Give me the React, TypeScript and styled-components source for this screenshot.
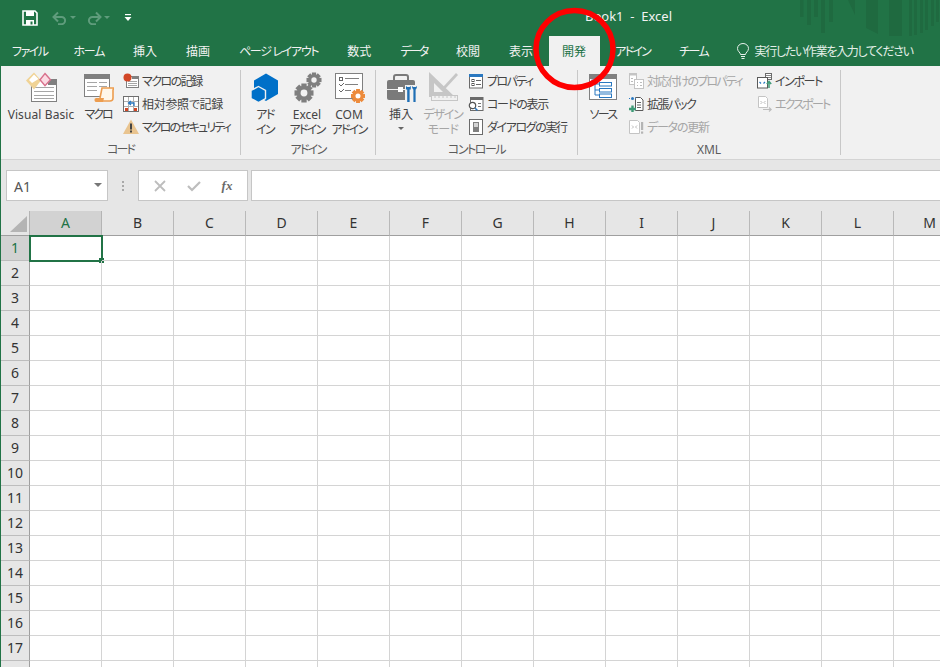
import { FC, ReactNode } from 'react'
import styled, { createGlobalStyle } from 'styled-components'

const GlobalStyle = createGlobalStyle`
html, body { margin: 0; padding: 0; background: #fff; }
body { width: 940px; height: 667px; overflow: hidden; }
`
const GREEN = '#217346'
const INK = '#444'
const DIM = '#a6a6a6'
const FONT = `"Noto Sans", "Noto Sans CJK JP", sans-serif`

const Page = styled.div`
position: relative;
width: 940px;
height: 667px;
overflow: hidden;
border-left: 1px solid ${GREEN};
box-sizing: border-box;
font-family: ${FONT};
font-feature-settings: "palt";
font-size: 12px;
color: ${INK};
background: #fff;
`
// kana in the reference font are narrower than Noto's, so each label carries its own tracking
const Txt = styled.span<{ $t?: number }>`
letter-spacing: ${p => p.$t ?? 0}px;
white-space: pre;
`
const TitleBar = styled.div`
position: relative;
height: 36px;
background: ${GREEN};
display: flex;
align-items: center;
padding-left: 21px;
box-sizing: border-box;
`
const Qat = styled.div`
display: flex;
align-items: center;
width: 563px;
`
const QatButton = styled.span<{ $w: number }>`
width: ${p => p.$w}px;
height: 16px;
display: flex;
align-items: center;
`
const WindowTitle = styled.div`
color: #f2f2f2;
font-size: 13px;
white-space: pre;
margin-top: -5px;
`
const Stripes = styled.svg`
position: absolute;
right: 0;
top: 0;
`
const TabStrip = styled.div`
height: 30px;
background: ${GREEN};
display: flex;
align-items: stretch;
gap: 2px;
`
const Tab = styled.div<{ $active?: boolean }>`
padding: 0 13.5px;
display: flex;
align-items: center;
white-space: pre;
color: ${p => (p.$active ? GREEN : '#f2f2f2')};
background: ${p => (p.$active ? '#f1f1f1' : 'transparent')};
&:first-child { padding: 0 10.5px 0 11px; }
`
const TellMe = styled.div`
margin-left: 12px;
display: flex;
align-items: center;
gap: 5px;
color: #e4efe8;
white-space: pre;
`
const Ribbon = styled.div`
height: 94px;
background: #f1f1f1;
border-bottom: 1px solid #d4d4d4;
box-sizing: border-box;
display: flex;
padding-top: 4px;
`
const Group = styled.div<{ $w: number }>`
width: ${p => p.$w}px;
height: 85px;
box-sizing: border-box;
border-right: 1px solid #c8c8c8;
display: flex;
flex-direction: column;
`
const GroupBody = styled.div<{ $pad: number }>`
height: 73px;
display: flex;
padding-left: ${p => p.$pad}px;
padding-top: 1px;
box-sizing: border-box;
`
const GroupLabel = styled.div`
height: 12px;
line-height: 14px;
text-align: center;
color: #5c5c5c;
`
const LargeButton = styled.div<{ $w: number; $off?: boolean }>`
width: ${p => p.$w}px;
display: flex;
flex-direction: column;
align-items: center;
flex-shrink: 0;
color: ${p => (p.$off ? DIM : INK)};
svg { display: block; flex-shrink: 0; }
`
const LargeLabel = styled.div`
margin-top: 4px;
text-align: center;
${Txt} {
  display: block;
  height: 15px;
  line-height: 15px;
}
`
const Caret = styled.div`
width: 0;
height: 0;
margin-top: 5px;
border-left: 3px solid transparent;
border-right: 3px solid transparent;
border-top: 3px solid #666;
`
const SmallColumn = styled.div<{ $w: number; $left: number }>`
width: ${p => p.$w}px;
margin-left: ${p => p.$left}px;
display: flex;
flex-direction: column;
gap: 5px;
padding-top: 1px;
flex-shrink: 0;
`
const SmallButton = styled.div<{ $off?: boolean }>`
height: 18px;
display: flex;
align-items: center;
gap: 3px;
white-space: pre;
color: ${p => (p.$off ? DIM : INK)};
svg { flex-shrink: 0; }
`
const FormulaArea = styled.div`
height: 51px;
background: #e6e6e6;
display: flex;
align-items: flex-start;
padding: 10px 0 0 5px;
box-sizing: border-box;
`
const NameBox = styled.div`
width: 102px;
height: 31px;
box-sizing: border-box;
background: #fff;
border: 1px solid #c6c6c6;
display: flex;
align-items: center;
justify-content: space-between;
padding: 2px 5px 0 7px;
font-size: 14px;
color: #555;
`
const NameCaret = styled.span`
width: 0;
height: 0;
border-left: 4px solid transparent;
border-right: 4px solid transparent;
border-top: 4px solid #777;
margin-top: -4px;
`
const Dots = styled.div`
width: 30px;
height: 31px;
display: flex;
flex-direction: column;
align-items: center;
justify-content: center;
gap: 2px;
span { width: 2px; height: 2px; background: #a8a8a8; }
`
const FormulaButtons = styled.div`
width: 110px;
height: 31px;
box-sizing: border-box;
background: #fff;
border: 1px solid #c6c6c6;
display: flex;
align-items: center;
justify-content: space-around;
padding: 0 4px;
`
const FxLabel = styled.span`
font-family: "Liberation Serif", serif;
font-style: italic;
font-weight: 700;
font-size: 13px;
color: #6a6a6a;
`
const FormulaInput = styled.div`
flex: 1;
height: 31px;
margin-left: 3px;
box-sizing: border-box;
background: #fff;
border: 1px solid #c6c6c6;
border-right: none;
`
const Sheet = styled.div`
display: grid;
grid-template-columns: 29px repeat(13, 72px);
grid-auto-rows: 25px;
`
const Corner = styled.div`
height: 25px;
background: #e6e6e6;
box-sizing: border-box;
border-right: 1px solid #b4b4b4;
border-bottom: 1px solid #9f9f9f;
svg { display: block; }
`
const ColHead = styled.div<{ $on?: boolean }>`
box-sizing: border-box;
background: ${p => (p.$on ? '#d2d2d2' : '#e6e6e6')};
border-right: 1px solid ${p => (p.$on ? '#b4b4b4' : '#b9b9b9')};
border-bottom: 1px solid #9f9f9f;
display: flex;
align-items: center;
justify-content: center;
padding-bottom: 1px;
font-family: "Noto Sans", sans-serif;
font-size: 14px;
color: ${p => (p.$on ? GREEN : '#333')};
`
const RowHead = styled.div<{ $on?: boolean }>`
box-sizing: border-box;
background: ${p => (p.$on ? '#d2d2d2' : '#e6e6e6')};
border-right: 1px solid #9f9f9f;
border-bottom: 1px solid #bdbdbd;
display: flex;
align-items: center;
justify-content: center;
padding-bottom: 2px;
font-family: "Noto Sans", sans-serif;
font-size: 14px;
color: ${p => (p.$on ? GREEN : '#333')};
`
const Cell = styled.div`
position: relative;
box-sizing: border-box;
border-right: 1px solid #d4d4d4;
border-bottom: 1px solid #d4d4d4;
`
const Selection = styled.div`
position: absolute;
left: -1px;
top: -1px;
width: 74px;
height: 27px;
box-sizing: border-box;
border: 2px solid ${GREEN};
`
const Handle = styled.div`
position: absolute;
right: -3px;
bottom: -3px;
width: 5px;
height: 5px;
background: ${GREEN};
`
const Highlight = styled.svg`
position: absolute;
left: 530px;
top: 5px;
pointer-events: none;
`

const Icon: FC<{ s?: number; children: ReactNode }> = ({ s = 16, children }) => (
  <svg width={s} height={s} viewBox={`0 0 ${s} ${s}`}>{children}</svg>
)

const Gear: FC<{ cx: number; cy: number; r: number; color: string; hole?: string }> = ({ cx, cy, r, color, hole = '#f1f1f1' }) => (
  <g>
    {[0, 45, 90, 135].map(a => (
      <rect key={a} x={cx - r * 0.28} y={cy - r} width={r * 0.56} height={r * 2} fill={color} transform={`rotate(${a} ${cx} ${cy})`} />
    ))}
    <circle cx={cx} cy={cy} r={r * 0.76} fill={color} />
    <circle cx={cx} cy={cy} r={r * 0.36} fill={hole} />
  </g>
)

const SaveIcon = () => (
  <svg width="16" height="16" viewBox="0 0 16 16">
    <path d="M1 1h12l2 2v12H1z" fill="none" stroke="#fff" strokeWidth="1.6" />
    <rect x="4" y="1" width="8" height="5" fill="#fff" />
    <rect x="4" y="10" width="8" height="5" fill="#fff" />
    <rect x="8.5" y="11.5" width="2" height="3" fill={GREEN} />
  </svg>
)
const UndoIcon: FC<{ flip?: boolean }> = ({ flip }) => (
  <svg width="15" height="14" viewBox="0 0 15 14" style={flip ? { transform: 'scaleX(-1)' } : undefined}>
    <path d="M2 6h7.5a3.6 3.6 0 0 1 0 7.2H6" fill="none" stroke="#5f9c7c" strokeWidth="2" />
    <path d="M6 1.5L1.5 6 6 10.5" fill="none" stroke="#5f9c7c" strokeWidth="2" />
  </svg>
)
const TinyCaret = () => (
  <svg width="6" height="4" viewBox="0 0 6 4"><path d="M0 0h6L3 3z" fill="#5f9c7c" /></svg>
)
const CustomizeIcon = () => (
  <svg width="8" height="8" viewBox="0 0 8 8">
    <rect x="1" y="0" width="6" height="1.2" fill="#fff" />
    <path d="M0.5 3h7L4 7z" fill="#fff" />
  </svg>
)
const BulbIcon = () => (
  <svg width="14" height="17" viewBox="0 0 14 17" fill="none" stroke="#e8f1ec" strokeWidth="1">
    <path d="M4.5 11.5C4.5 9.5 1.5 8.5 1.5 5.5a5.5 5 0 0 1 11 0c0 3-3 4-3 6z" />
    <path d="M5 13.5h4M5.5 15.5h3" />
  </svg>
)

const SheetLines: FC<{ x1: number; x2: number; ys: number[]; color?: string }> = ({ x1, x2, ys, color = '#a6a6a6' }) => (
  <>{ys.map(y => <path key={y} d={`M${x1} ${y + 0.5}H${x2}`} stroke={color} />)}</>
)

const VbIcon = () => (
  <Icon s={32}>
    <rect x="6.5" y="8.5" width="25" height="22" fill="#fff" stroke="#808080" />
    <rect x="23" y="8" width="9" height="6" fill="#808080" />
    <SheetLines x1={9} x2={29} ys={[16, 20, 24, 27]} />
    <path d="M9 1.5l7 8-7 9-8-9z" fill="#f0d395" />
    <path d="M9 3.5l4.5 4.500-6.500 4-3-3z" fill="#fff" />
    <path d="M20 2.5l5.5 6.2-5.5 6-5-6z" fill="#fbdbe3" stroke="#d8708c" strokeWidth="1.4" />
  </Icon>
)
const MacroIcon = () => (
  <Icon s={32}>
    <rect x="2.5" y="3.5" width="25" height="22" fill="#fff" stroke="#808080" />
    <rect x="2" y="3" width="26" height="5" fill="#808080" />
    <SheetLines x1={5} x2={15} ys={[11, 15, 19]} />
    <SheetLines x1={17} x2={25} ys={[11, 15]} />
    <path d="M20 17h12l-1 2v8c0 2-1 3-3 3H17l1-3z" fill="#fff7ea" stroke="#ed9d4f" strokeWidth="1.6" />
    <path d="M14 27h8l-1 4h-6a2 2 0 0 1-1-4z" fill="#ed9d4f" />
  </Icon>
)
const RecordIcon = () => (
  <Icon>
    <rect x="3.5" y="3.5" width="12" height="11" fill="#fff" stroke="#808080" />
    <rect x="9" y="3" width="7" height="3" fill="#808080" />
    <SheetLines x1={5} x2={14} ys={[8, 10, 12]} />
    <circle cx="4.5" cy="4.5" r="4" fill="#d24726" />
  </Icon>
)
const RelativeIcon = () => (
  <Icon>
    <rect x="0.5" y="0.5" width="15" height="15" fill="#fff" stroke="#6f6f6f" />
    <path d="M5.5 1v14M10.5 1v14M1 5.5h14M1 10.5h14" stroke="#b0b0b0" />
    <rect x="2" y="12" width="3" height="3" fill="#d24726" />
    <rect x="11" y="12" width="3" height="3" fill="#d24726" />
    <path d="M11 10V7H6M8 5L5.5 7 8 9" fill="none" stroke="#2a78c0" strokeWidth="1.3" />
  </Icon>
)
const SecurityIcon = () => (
  <Icon>
    <path d="M8 0.5L16 15H0z" fill="#e9c48f" />
    <rect x="7" y="4.5" width="2" height="6" fill="#444" />
    <rect x="7" y="11.5" width="2" height="2" fill="#444" />
  </Icon>
)
const AddinIcon = () => (
  <Icon s={32}>
    <path d="M17 2.5l12 7v13.5l-12 7-12-7V9.500z" fill="#0070c8" />
    <path d="M9.500 15.500l7 4v8l-7 4-7.500-4v-8z" fill="#0070c8" stroke="#f1f1f1" strokeWidth="1.4" />
  </Icon>
)
const ExcelAddinIcon = () => (
  <Icon s={32}>
    <Gear cx={13} cy={22} r={9.500} color="#7f7f7f" />
    <Gear cx={23} cy={9} r={7.500} color="#7f7f7f" />
  </Icon>
)
const ComAddinIcon = () => (
  <Icon s={32}>
    <rect x="2.500" y="2.500" width="27" height="25" fill="#fff" stroke="#808080" />
    <rect x="6.500" y="6.500" width="3" height="3" fill="none" stroke="#666" />
    <path d="M12 7.500h14M12 13.500h13M12 19.500h6" stroke="#808080" />
    <path d="M6 13l2 2 3-3M6 19l2 2 3-3" fill="none" stroke="#666" />
    <Gear cx={25} cy={25} r={7} color="#ed8b3c" hole="#fff" />
  </Icon>
)
const InsertIcon = () => (
  <Icon s={32}>
    <path d="M9 9V6a2 2 0 0 1 2-2h10a2 2 0 0 1 2 2v3" fill="none" stroke="#7a7a7a" strokeWidth="2" />
    <rect x="2" y="9" width="28" height="20" rx="2" fill="#7a7a7a" />
    <path d="M2 18.500h28" stroke="#f1f1f1" />
    <rect x="13" y="16" width="5" height="5" fill="#fff" />
    <path d="M20 14h12v18H20z" fill="#f1f1f1" />
    <path d="M21 15v3.500h1.200V31h2.400V18.500h1.200V15l-1.200 1h-2.400z" fill="#1f6fb5" />
    <path d="M27 15c0 2 1 3.500 1.400 3.500V31h2.200V18.500c.5 0 1.400-1.500 1.400-3.500l-1.200 1h-2.600z" fill="#1f6fb5" />
  </Icon>
)
const DesignIcon = () => (
  <Icon s={32}>
    <path d="M2 1v25h26zM7 12v9h9z" fill="#c6c6c6" fillRule="evenodd" />
    <path d="M31 4l-12 13-3 1 1-3L29 2z" fill="#c6c6c6" />
    <rect x="4.500" y="24.500" width="26" height="5" fill="#f1f1f1" stroke="#c6c6c6" />
    <path d="M8 25v2M12 25v2M16 25v2M20 25v2M24 25v2M28 25v2" stroke="#c6c6c6" />
  </Icon>
)
const PropIcon = () => (
  <Icon>
    <rect x="1.500" y="1.500" width="13" height="13.500" fill="#fff" stroke="#6b6b6b" />
    <rect x="1" y="1" width="14" height="3" fill="#2a78c0" />
    <rect x="4" y="6.500" width="2" height="2" fill="none" stroke="#555" />
    <rect x="4" y="10.500" width="2" height="2" fill="none" stroke="#555" />
    <path d="M8 7.500h5M8 11.500h5" stroke="#666" />
  </Icon>
)
const CodeIcon = () => (
  <Icon>
    <rect x="2.500" y="1.500" width="12.500" height="13" fill="#fff" stroke="#6b6b6b" />
    <rect x="2" y="1" width="13" height="3" fill="#6b6b6b" />
    <path d="M10 7.500h3M10 10.500h3" stroke="#777" />
    <circle cx="4.500" cy="9.500" r="3.200" fill="#fff" stroke="#555" strokeWidth="1.200" />
    <path d="M7 12l2.500 2.500" stroke="#2a78c0" strokeWidth="1.500" />
  </Icon>
)
const DialogIcon = () => (
  <Icon>
    <rect x="1.500" y="0.500" width="13" height="15" fill="#fff" stroke="#6b6b6b" />
    <rect x="5.500" y="3.500" width="5" height="9" fill="#d4d4d4" stroke="#808080" />
    <rect x="5.500" y="8" width="5" height="4.500" fill="#808080" />
  </Icon>
)
const SourceIcon = () => (
  <Icon s={32}>
    <rect x="2.500" y="3.500" width="27" height="25" fill="#fff" stroke="#808080" />
    <rect x="2" y="3" width="28" height="5" fill="#808080" />
    <path d="M8 8v16M8 13h4M8 19h4M8 24h4" fill="none" stroke="#2a78c0" />
    <rect x="5" y="9" width="5" height="3" fill="#fff" stroke="#2a78c0" />
    <rect x="12.500" y="11.500" width="12" height="3.500" fill="#fff" stroke="#2a78c0" />
    <rect x="12.500" y="17.500" width="12" height="3.500" fill="#fff" stroke="#2a78c0" />
    <rect x="12.500" y="23" width="12" height="3.500" fill="#fff" stroke="#2a78c0" />
  </Icon>
)
const MapPropIcon = () => (
  <Icon>
    <rect x="1.500" y="0.500" width="7" height="11" fill="#fff" stroke="#c4c4c4" />
    <rect x="1" y="0" width="8" height="2.500" fill="#c4c4c4" />
    <rect x="6.500" y="6.500" width="9" height="9" fill="#fff" stroke="#c4c4c4" />
    <path d="M9 9.500h1M12 9.500h2M9 12.500h1M12 12.500h2M3 5.500h2M3 8.500h2" stroke="#bcbcbc" />
  </Icon>
)
const ExpansionIcon = () => (
  <Icon>
    <path d="M7.500 1.500h5l2.500 2.500v10.500H7.500z" fill="#fff" stroke="#5a5a5a" />
    <path d="M9 6.500h4M9 9h4M9 11.500h4" stroke="#666" />
    <circle cx="4.500" cy="2.500" r="1.500" fill="#2a78c0" />
    <path d="M1 2.500h1M7 2.500h1" stroke="#2a78c0" />
    <path d="M1 13h7M4.500 9.500v6.500" stroke="#3f9b78" strokeWidth="2.400" />
  </Icon>
)
const RefreshIcon = () => (
  <Icon>
    <path d="M1.500 1.500h8l2 2v11h-10z" fill="#fff" stroke="#c4c4c4" />
    <path d="M4 6.500l1.500 1.500L4 9.500M9 6.500L7.500 8 9 9.500" fill="none" stroke="#bcbcbc" />
    <rect x="13" y="3" width="2.200" height="8" fill="#b4b4b4" />
    <rect x="13" y="12.500" width="2.200" height="2.200" fill="#b4b4b4" />
  </Icon>
)
const ImportIcon = () => (
  <Icon>
    <rect x="9.500" y="0.500" width="6" height="6" fill="#fff" stroke="#6b6b6b" />
    <path d="M10 2.500h5M10 4.500h5" stroke="#888" />
    <rect x="1.500" y="4.500" width="10" height="10.500" fill="#fff" stroke="#5a5a5a" />
    <path d="M3.500 9l1.500 1.500M9 9L7.500 10.500" stroke="#2a78c0" strokeWidth="1.200" />
    <path d="M13 15V9M10.800 11L13 8.500 15.200 11" fill="none" stroke="#3f9b78" strokeWidth="1.500" />
  </Icon>
)
const ExportIcon = () => (
  <Icon>
    <path d="M2.500 0.500h7l2 2v9h-9z" fill="#fff" stroke="#c4c4c4" />
    <path d="M4.500 5l1.500 1.500L4.500 8M9.500 5L8 6.500 9.500 8" fill="none" stroke="#bcbcbc" />
    <path d="M7 13.500h8M13 11.500l2.200 2-2.200 2" fill="none" stroke="#bcbcbc" strokeWidth="1.200" />
  </Icon>
)

const COLUMNS = 'ABCDEFGHIJKLM'.split('')
const ROWS = Array.from({ length: 18 }, (_, i) => i + 1)
const TABS: { label: string; t?: number }[] = [
  { label: 'ファイル', t: -1.5 },
  { label: 'ホーム', t: -1.3 },
  { label: '挿入' },
  { label: '描画' },
  { label: 'ページ レイアウト', t: -1.3 },
  { label: '数式' },
  { label: 'データ', t: -2.3 },
  { label: '校閲' },
  { label: '表示' },
  { label: '開発' },
  { label: 'アドイン', t: -1.7 },
  { label: 'チーム', t: -1.6 },
]

const App: FC = () => (
  <Page>
    <GlobalStyle />
    <TitleBar>
      <Qat>
        <QatButton $w={30}><SaveIcon /></QatButton>
        <QatButton $w={18}><UndoIcon /></QatButton>
        <QatButton $w={17}><TinyCaret /></QatButton>
        <QatButton $w={17}><UndoIcon flip /></QatButton>
        <QatButton $w={20}><TinyCaret /></QatButton>
        <QatButton $w={10}><CustomizeIcon /></QatButton>
      </Qat>
      <WindowTitle>Book1  -  Excel</WindowTitle>
      <Stripes width="140" height="36" viewBox="800 0 140 36">
        <g fill="#1f6a40">
          <rect x="800" width="3.500" height="17" />
          <rect x="807" width="4" height="25" />
          <rect x="814" width="4" height="17" />
          <rect x="821" width="4" height="33" />
          <rect x="829" width="4" height="22" />
          <path d="M848 0h7v15z" />
          <path d="M866 0h12v34l-12-6z" />
          <path d="M889 0h13v38h-13z" />
          <rect x="909" width="3" height="36" />
          <rect x="914" width="3" height="35" />
          <rect x="920" width="3" height="33" />
          <rect x="925" width="3" height="30" />
          <rect x="931" width="3" height="26" />
          <rect x="936" width="3" height="22" />
        </g>
      </Stripes>
    </TitleBar>
    <TabStrip>
      {TABS.map(({ label, t }) => <Tab key={label} $active={label === '開発'}><Txt $t={t}>{label}</Txt></Tab>)}
      <TellMe><BulbIcon /><Txt $t={-1.3}>実行したい作業を入力してください</Txt></TellMe>
    </TabStrip>
    <Ribbon>
      <Group $w={240}>
        <GroupBody $pad={5}>
          <LargeButton $w={70}><VbIcon /><LargeLabel><Txt $t={0.1}>Visual Basic</Txt></LargeLabel></LargeButton>
          <LargeButton $w={44}><MacroIcon /><LargeLabel><Txt $t={-2}>マクロ</Txt></LargeLabel></LargeButton>
          <SmallColumn $w={110} $left={3}>
            <SmallButton><RecordIcon /><Txt $t={-1.5}>マクロの記録</Txt></SmallButton>
            <SmallButton><RelativeIcon /><Txt $t={-0.3}>相対参照で記録</Txt></SmallButton>
            <SmallButton><SecurityIcon /><Txt $t={-1.9}>マクロのセキュリティ</Txt></SmallButton>
          </SmallColumn>
        </GroupBody>
        <GroupLabel><Txt $t={-2}>コード</Txt></GroupLabel>
      </Group>
      <Group $w={135}>
        <GroupBody $pad={3}>
          <LargeButton $w={42}><AddinIcon /><LargeLabel><Txt $t={-1.5}>アド</Txt><Txt $t={-1.5}>イン</Txt></LargeLabel></LargeButton>
          <LargeButton $w={42}><ExcelAddinIcon /><LargeLabel><Txt>Excel</Txt><Txt $t={-1.7}>アドイン</Txt></LargeLabel></LargeButton>
          <LargeButton $w={42}><ComAddinIcon /><LargeLabel><Txt>COM</Txt><Txt $t={-1.7}>アドイン</Txt></LargeLabel></LargeButton>
        </GroupBody>
        <GroupLabel><Txt $t={-1.7}>アドイン</Txt></GroupLabel>
      </Group>
      <Group $w={202}>
        <GroupBody $pad={5}>
          <LargeButton $w={40}><InsertIcon /><LargeLabel><Txt>挿入</Txt></LargeLabel><Caret /></LargeButton>
          <LargeButton $w={44} $off><DesignIcon /><LargeLabel><Txt $t={-1.2}>デザイン</Txt><Txt $t={-0.7}>モード</Txt></LargeLabel></LargeButton>
          <SmallColumn $w={110} $left={3}>
            <SmallButton><PropIcon /><Txt $t={-1.6}>プロパティ</Txt></SmallButton>
            <SmallButton><CodeIcon /><Txt $t={-1.2}>コードの表示</Txt></SmallButton>
            <SmallButton><DialogIcon /><Txt $t={-1.4}>ダイアログの実行</Txt></SmallButton>
          </SmallColumn>
        </GroupBody>
        <GroupLabel><Txt $t={-1.5}>コントロール</Txt></GroupLabel>
      </Group>
      <Group $w={263}>
        <GroupBody $pad={2}>
          <LargeButton $w={46}><SourceIcon /><LargeLabel><Txt $t={-1.6}>ソース</Txt></LargeLabel></LargeButton>
          <SmallColumn $w={128} $left={2}>
            <SmallButton $off><MapPropIcon /><Txt $t={-1.8}>対応付けのプロパティ</Txt></SmallButton>
            <SmallButton><ExpansionIcon /><Txt $t={-1.4}>拡張パック</Txt></SmallButton>
            <SmallButton $off><RefreshIcon /><Txt $t={-1.2}>データの更新</Txt></SmallButton>
          </SmallColumn>
          <SmallColumn $w={84} $left={0}>
            <SmallButton><ImportIcon /><Txt $t={-1.4}>インポート</Txt></SmallButton>
            <SmallButton $off><ExportIcon /><Txt $t={-1.8}>エクスポート</Txt></SmallButton>
          </SmallColumn>
        </GroupBody>
        <GroupLabel>XML</GroupLabel>
      </Group>
    </Ribbon>
    <FormulaArea>
      <NameBox>A1<NameCaret /></NameBox>
      <Dots><span /><span /><span /></Dots>
      <FormulaButtons>
        <svg width="12" height="12" viewBox="0 0 12 12"><path d="M1 1l10 10M11 1L1 11" stroke="#bdbdbd" strokeWidth="1.800" /></svg>
        <svg width="14" height="12" viewBox="0 0 14 12"><path d="M1 6l4 4 8-8" fill="none" stroke="#bdbdbd" strokeWidth="2.200" /></svg>
        <FxLabel>fx</FxLabel>
      </FormulaButtons>
      <FormulaInput />
    </FormulaArea>
    <Sheet>
      <Corner>
        <svg width="28" height="24" viewBox="0 0 28 24"><path d="M26 5v16H9z" fill="#b4b4b4" /></svg>
      </Corner>
      {COLUMNS.map(c => <ColHead key={c} $on={c === 'A'}>{c}</ColHead>)}
      {ROWS.map(r => [
        <RowHead key={`h${r}`} $on={r === 1}>{r < 18 ? r : ''}</RowHead>,
        ...COLUMNS.map(c => (
          <Cell key={c + r}>
            {r === 1 && c === 'A' && <Selection><Handle /></Selection>}
          </Cell>
        )),
      ])}
    </Sheet>
    <Highlight width="90" height="90" viewBox="0 0 90 90">
      <ellipse cx="43.500" cy="44" rx="38.500" ry="38.500" fill="none" stroke="#fe0000" strokeWidth="5.500" />
    </Highlight>
  </Page>
)
export default App
